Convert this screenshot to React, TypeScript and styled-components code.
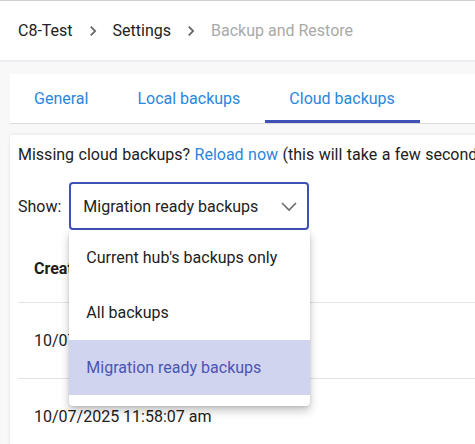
import React from 'react'
import styled, { createGlobalStyle } from 'styled-components'

const GlobalStyle = createGlobalStyle`
	html, body {
		margin: 0;
		padding: 0;
		background: #f8f8f9;
		font-family: Roboto, "Liberation Sans", Arial, sans-serif;
		color: #212121;
		overflow: hidden;
	}
`

const Page = styled.div`
	width: 720px;
	min-height: 444px;
	border-top: 1px solid #cfcfcf;
`

const Header = styled.header`
	height: 59px;
	background: #fff;
	border-bottom: 2px solid #ebebf1;
	display: flex;
	align-items: center;
	padding-left: 18px;
	font-size: 16px;
`

const Crumb = styled.span<{ $current?: boolean }>`
	color: ${p => (p.$current ? '#a9a9a9' : '#222')};
	line-height: 20px;
`

const Sep = styled.span`
	display: flex;
	width: 40px;
	justify-content: center;
	color: #616161;
`

const Body = styled.main`
	padding: 12px 0 0 10px;
	display: flex;
	flex-direction: column;
	gap: 11px;
`

const TabBar = styled.nav`
	display: flex;
	background: #fff;
	border-bottom: 1px solid #dcdcdc;
`

const Tab = styled.a<{ $active?: boolean }>`
	height: 49px;
	box-sizing: border-box;
	padding: 3px 25px 0 24px;
	display: flex;
	align-items: center;
	font-size: 16px;
	color: #2a87dc;
	border-bottom: 3px solid ${p => (p.$active ? '#3f51b5' : 'transparent')};
	cursor: pointer;
`

const Card = styled.section`
	background: #fff;
	padding: 8px 8px 0;
	box-shadow: 0 0 4px rgba(0, 0, 0, 0.08);
	min-height: 320px;
`

const Notice = styled.p`
	margin: 0;
	font-size: 16px;
	line-height: 24px;
	white-space: nowrap;
	word-spacing: 0.5px;
`

const Link = styled.a`
	color: #2a87dc;
	cursor: pointer;
`

const FilterRow = styled.div`
	margin-top: 15px;
	display: flex;
	align-items: center;
	gap: 8px;
	font-size: 16px;
`

const SelectWrap = styled.div`
	position: relative;
	z-index: 2;
`

const SelectBox = styled.div`
	width: 240px;
	height: 48px;
	box-sizing: border-box;
	border: 2px solid #3f51b5;
	border-radius: 4px;
	display: flex;
	align-items: center;
	justify-content: space-between;
	padding: 0 6px 0 12px;
	color: #222;
`

const Menu = styled.ul`
	position: absolute;
	top: 100%;
	left: 0;
	width: 241px;
	margin: 0;
	padding: 0 0 11px;
	list-style: none;
	background: #fff;
	border-radius: 4px;
	box-shadow: 0 5px 10px rgba(0, 0, 0, 0.22), 0 1px 3px rgba(0, 0, 0, 0.12);
`

const MenuItem = styled.li<{ $selected?: boolean }>`
	height: 55px;
	display: flex;
	align-items: center;
	padding-left: 17px;
	font-size: 16px;
	color: ${p => (p.$selected ? '#4a55b3' : '#222')};
	background: ${p => (p.$selected ? '#d1d4ee' : 'transparent')};
`

const Table = styled.table`
	margin-top: 6px;
	border-collapse: collapse;
	width: 700px;
	font-size: 16px;
`

const Th = styled.th<{ $w?: number }>`
	text-align: left;
	font-weight: 700;
	height: 66px;
	padding: 0 16px;
	width: ${p => (p.$w ? `${p.$w}px` : 'auto')};
	box-sizing: border-box;
	border-bottom: 1px solid #e3e3e3;
	color: #1c1c1c;
`

const Td = styled.td`
	height: 75px;
	padding: 0 16px;
	border-bottom: 1px solid #e3e3e3;
	white-space: nowrap;
`

const Chevron = () => (
	<svg width='20' height='20' viewBox='0 0 24 24' fill='currentColor'>
		<path d='M10 6 8.59 7.41 13.17 12l-4.58 4.59L10 18l6-6z' />
	</svg>
)

const ExpandMore = () => (
	<svg width='24' height='24' viewBox='0 0 24 24' fill='none' stroke='#6b6b6b' strokeWidth='1.6'>
		<path d='M5 9l7 7 7-7' />
	</svg>
)

const options = ["Current hub's backups only", 'All backups', 'Migration ready backups']

const rows = [
	{ created: '10/07/2025 12:04:31 pm', hub: 'Hub C8-Test' },
	{ created: '10/07/2025 11:58:07 am', hub: 'Hub C8-Test' },
]

export default function App() {
	return (
		<Page>
			<GlobalStyle />
			<Header>
				<Crumb>C8-Test</Crumb>
				<Sep><Chevron /></Sep>
				<Crumb>Settings</Crumb>
				<Sep><Chevron /></Sep>
				<Crumb $current>Backup and Restore</Crumb>
			</Header>
			<Body>
				<TabBar>
					<Tab>General</Tab>
					<Tab>Local backups</Tab>
					<Tab $active>Cloud backups</Tab>
				</TabBar>
				<Card>
					<Notice>
						Missing cloud backups? <Link>Reload now</Link> (this will take a few seconds)
					</Notice>
					<FilterRow>
						<span>Show:</span>
						<SelectWrap>
							<SelectBox>
								<span>Migration ready backups</span>
								<ExpandMore />
							</SelectBox>
							<Menu>
								{options.map(o => (
									<MenuItem key={o} $selected={o === 'Migration ready backups'}>{o}</MenuItem>
								))}
							</Menu>
						</SelectWrap>
					</FilterRow>
					<Table>
						<thead>
							<tr>
								<Th $w={441}>Created</Th>
								<Th>Hub</Th>
							</tr>
						</thead>
						<tbody>
							{rows.map(r => (
								<tr key={r.created}>
									<Td>{r.created}</Td>
									<Td>{r.hub}</Td>
								</tr>
							))}
						</tbody>
					</Table>
				</Card>
			</Body>
		</Page>
	)
}
